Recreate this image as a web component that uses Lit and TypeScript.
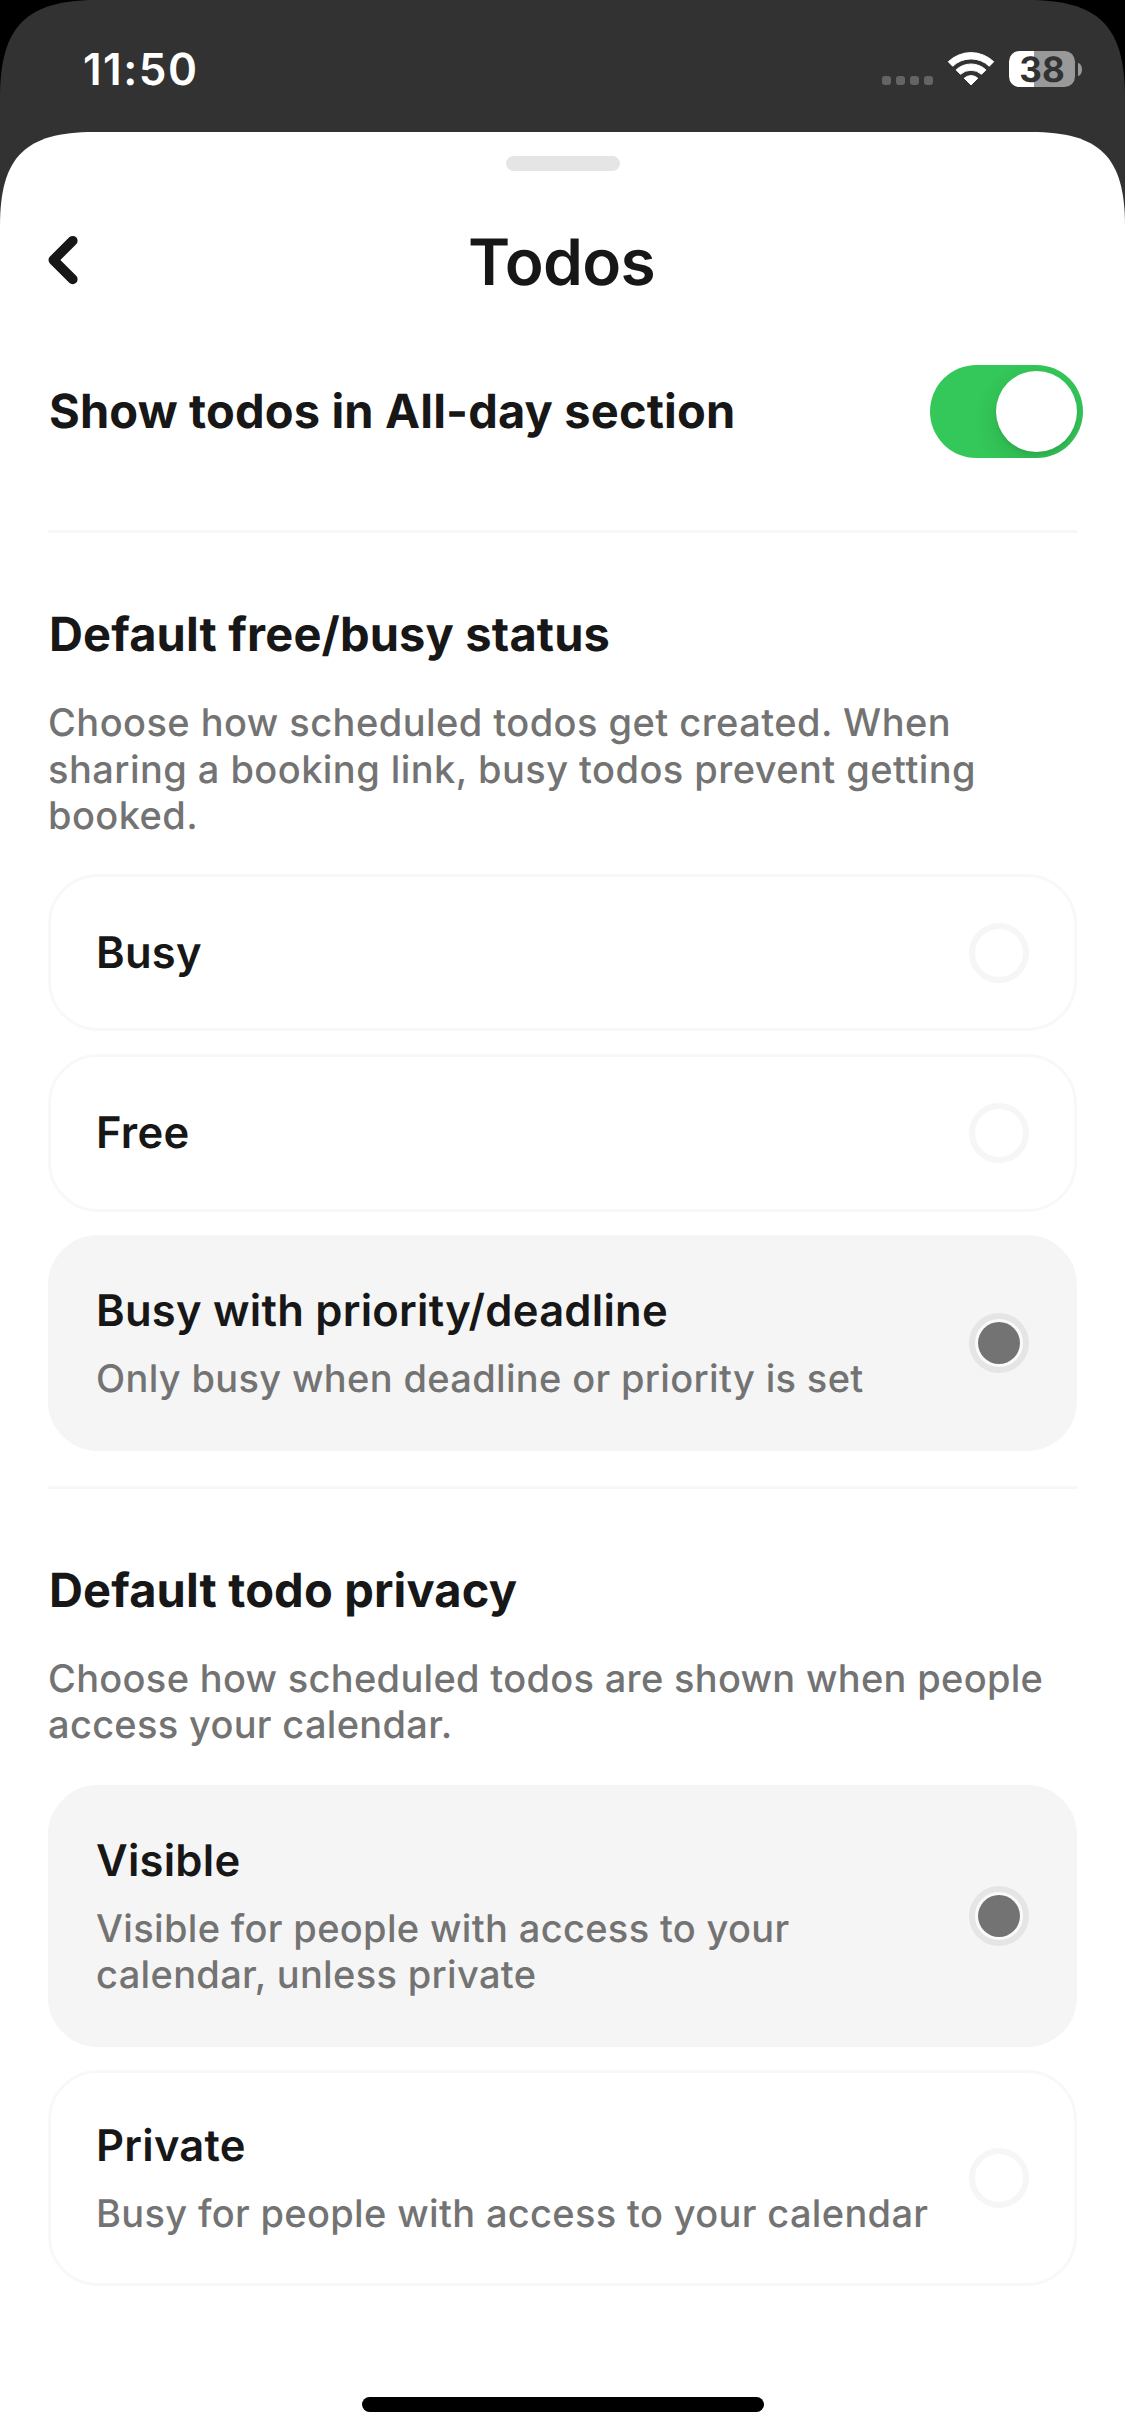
import { LitElement, html, css, nothing } from "lit";
import { customElement, property, state } from "lit/decorators.js";
import { classMap } from "lit/directives/class-map.js";

interface Option {
  id: string;
  title: string;
  detail?: string;
}

const BUSY_OPTIONS: Option[] = [
  { id: "busy", title: "Busy" },
  { id: "free", title: "Free" },
  {
    id: "deadline",
    title: "Busy with priority/deadline",
    detail: "Only busy when deadline or priority is set",
  },
];

const PRIVACY_OPTIONS: Option[] = [
  {
    id: "visible",
    title: "Visible",
    detail: "Visible for people with access to your\ncalendar, unless private",
  },
  {
    id: "private",
    title: "Private",
    detail: "Busy for people with access to your calendar",
  },
];

@customElement("status-bar")
class StatusBar extends LitElement {
  static styles = css`
    :host {
      display: flex;
      justify-content: space-between;
      align-items: center;
      box-sizing: border-box;
      height: 132px;
      padding: 6px 43px 0 83px;
      color: #fff;
    }
    .time {
      font-size: 44px;
      font-weight: 600;
      line-height: 54px;
      letter-spacing: 1.5px;
    }
    .indicators {
      display: flex;
      align-items: center;
    }
    .dots {
      display: flex;
      gap: 5px;
      margin: 23px 14px 0 0;
    }
    .dot {
      width: 9px;
      height: 9px;
      border-radius: 3px;
      background: #646464;
    }
    .wifi {
      display: block;
      width: 48px;
      height: 36px;
      margin-right: 14px;
    }
    .battery {
      display: flex;
      align-items: center;
      justify-content: center;
      box-sizing: border-box;
      width: 66px;
      height: 36px;
      padding-top: 2px;
      border-radius: 10.5px;
      background: linear-gradient(to right, #fff 25px, #999 25px);
      color: #323232;
      font-size: 35px;
      font-weight: 700;
      line-height: 34px;
    }
    .cap {
      display: block;
      width: 4px;
      height: 13px;
      margin-left: 3px;
      border-radius: 0 4px 4px 0 / 0 6.5px 6.5px 0;
      background: #999;
    }
  `;

  render() {
    return html`
      <div class="time">11:50</div>
      <div class="indicators">
        <div class="dots">
          <span class="dot"></span><span class="dot"></span><span class="dot"></span><span class="dot"></span>
        </div>
        <svg class="wifi" viewBox="0 0 48 36" fill="#fff" stroke="#fff" stroke-width="1" stroke-linejoin="round">
          <path d="M1.3 10.7 A32.9 32.9 0 0 1 46.7 10.7 L42.3 15.2 A26.6 26.6 0 0 0 5.7 15.2 Z" />
          <path d="M9.1 18.9 A21.8 21.8 0 0 1 38.9 18.9 L34.5 23.3 A15.6 15.6 0 0 0 13.5 23.3 Z" />
          <path d="M17.2 27.2 A10.2 10.2 0 0 1 30.8 27.2 L24 33.9 Z" />
        </svg>
        <span class="battery">38</span>
        <span class="cap"></span>
      </div>
    `;
  }
}

@customElement("toggle-switch")
class ToggleSwitch extends LitElement {
  @property({ type: Boolean }) on = false;

  static styles = css`
    :host {
      display: block;
    }
    .track {
      display: flex;
      justify-content: flex-start;
      box-sizing: border-box;
      width: 153px;
      height: 93px;
      padding: 6px;
      border-radius: 47px;
      background: #e9e9ea;
      overflow: hidden;
    }
    .on {
      justify-content: flex-end;
      background: #34c759;
    }
    .knob {
      width: 81px;
      height: 81px;
      border-radius: 50%;
      background: #fff;
      box-shadow: 0 9px 24px rgba(0, 0, 0, 0.13), 0 3px 3px rgba(0, 0, 0, 0.05);
    }
  `;

  render() {
    return html`<div class=${classMap({ track: true, on: this.on })}><div class="knob"></div></div>`;
  }
}

@customElement("option-card")
class OptionCard extends LitElement {
  @property({ attribute: false }) option!: Option;
  @property({ type: Boolean }) selected = false;

  static styles = css`
    :host {
      display: block;
    }
    .card {
      display: flex;
      align-items: center;
      justify-content: space-between;
      box-sizing: border-box;
      min-height: 157.5px;
      padding: 46px 45px 45.5px;
      border: 3px solid #f8f8f8;
      border-radius: 50px;
    }
    .selected {
      border-color: #f5f5f5;
      background: #f5f5f5;
    }
    .title {
      color: #171717;
      font-size: 43.5px;
      font-weight: 600;
      line-height: 54px;
      letter-spacing: 0.26px;
    }
    .detail {
      margin-top: 18px;
      color: #737373;
      font-size: 38px;
      font-weight: 500;
      line-height: 46.5px;
      letter-spacing: 0.34px;
      white-space: pre;
    }
    .radio {
      display: flex;
      align-items: center;
      justify-content: center;
      flex: none;
      box-sizing: border-box;
      width: 60px;
      height: 60px;
      margin: -6px 0;
      border: 6px solid #f6f6f6;
      border-radius: 50%;
    }
    .selected .radio {
      border-color: #e5e5e5;
      background: #fafafa;
    }
    .selected .radio::after {
      content: "";
      width: 42px;
      height: 42px;
      border-radius: 50%;
      background: #737373;
    }
  `;

  render() {
    const { title, detail } = this.option;
    return html`
      <div class=${classMap({ card: true, selected: this.selected })}>
        <div>
          <div class="title">${title}</div>
          ${detail ? html`<div class="detail">${detail}</div>` : nothing}
        </div>
        <span class="radio"></span>
      </div>
    `;
  }
}

@customElement("app-root")
class AppRoot extends LitElement {
  @state() private busyStatus = "deadline";
  @state() private privacy = "visible";
  @state() private showInAllDay = true;

  static styles = css`
    :host {
      display: block;
      width: 1125px;
      height: 2436px;
      overflow: hidden;
      background: #000;
      font-family: Inter, "Liberation Sans", sans-serif;
      text-rendering: geometricPrecision;
    }
    .screen {
      background: #323232;
      clip-path: path("M0 98 C0 26 26 0 98 0 H1027 C1099 0 1125 26 1125 98 V2436 H0 Z");
    }
    .sheet {
      display: flex;
      flex-direction: column;
      box-sizing: border-box;
      height: 2304px;
      padding: 24px 48px;
      background: #fff;
      clip-path: path("M0 94 C0 25 25 0 94 0 H1031 C1100 0 1125 25 1125 94 V2304 H0 Z");
    }
    .handle {
      align-self: center;
      width: 114px;
      height: 15px;
      border-radius: 8px;
      background: #e5e5e5;
    }
    .header {
      display: grid;
      grid-template-columns: 1fr auto 1fr;
      align-items: center;
      height: 78px;
      margin-top: 52px;
    }
    .back {
      display: block;
      width: 30px;
      height: 50px;
      margin-top: -5px;
    }
    .page-title {
      padding: 1px 2px 0 0;
      color: #171717;
      font-size: 64px;
      font-weight: 600;
      line-height: 78px;
      letter-spacing: -0.7px;
    }
    .setting {
      display: flex;
      align-items: center;
      justify-content: space-between;
      height: 93px;
      margin: 64px -6px 72px 0;
    }
    .heading {
      padding: 1px 0 0 1px;
      color: #171717;
      font-size: 47px;
      font-weight: 700;
      line-height: 58px;
      letter-spacing: 0.15px;
    }
    .section {
      margin-bottom: 35px;
      padding-top: 72px;
      border-top: 3px solid #f7f7f7;
    }
    .description {
      margin-top: 36px;
      color: #737373;
      font-size: 38px;
      font-weight: 500;
      line-height: 46.5px;
      letter-spacing: 0.45px;
      white-space: pre;
    }
    .options {
      display: flex;
      flex-direction: column;
      gap: 23px;
      margin-top: 34px;
    }
    .privacy .description {
      letter-spacing: 0.31px;
    }
    .privacy .options {
      margin-top: 36px;
    }
    .home-indicator {
      align-self: center;
      width: 402px;
      height: 15px;
      margin-top: auto;
      border-radius: 8px;
      background: #000;
    }
  `;

  private optionList(options: Option[], selected: string) {
    return html`<div class="options">
      ${options.map((o) => html`<option-card .option=${o} ?selected=${o.id === selected}></option-card>`)}
    </div>`;
  }

  render() {
    return html`
      <div class="screen">
        <status-bar></status-bar>
        <div class="sheet">
          <div class="handle"></div>
          <div class="header">
            <svg class="back" viewBox="0 0 30 50" fill="none" stroke="#171717" stroke-width="9.8" stroke-linecap="round" stroke-linejoin="round">
              <path d="M24.7 5.8 L5.4 25 L24.7 44.3" />
            </svg>
            <div class="page-title">Todos</div>
          </div>
          <div class="setting">
            <div class="heading">Show todos in All-day section</div>
            <toggle-switch ?on=${this.showInAllDay}></toggle-switch>
          </div>
          <div class="section">
            <div class="heading">Default free/busy status</div>
            <div class="description">${"Choose how scheduled todos get created. When\nsharing a booking link, busy todos prevent getting\nbooked."}</div>
            ${this.optionList(BUSY_OPTIONS, this.busyStatus)}
          </div>
          <div class="section privacy">
            <div class="heading">Default todo privacy</div>
            <div class="description">${"Choose how scheduled todos are shown when people\naccess your calendar."}</div>
            ${this.optionList(PRIVACY_OPTIONS, this.privacy)}
          </div>
          <div class="home-indicator"></div>
        </div>
      </div>
    `;
  }
}
